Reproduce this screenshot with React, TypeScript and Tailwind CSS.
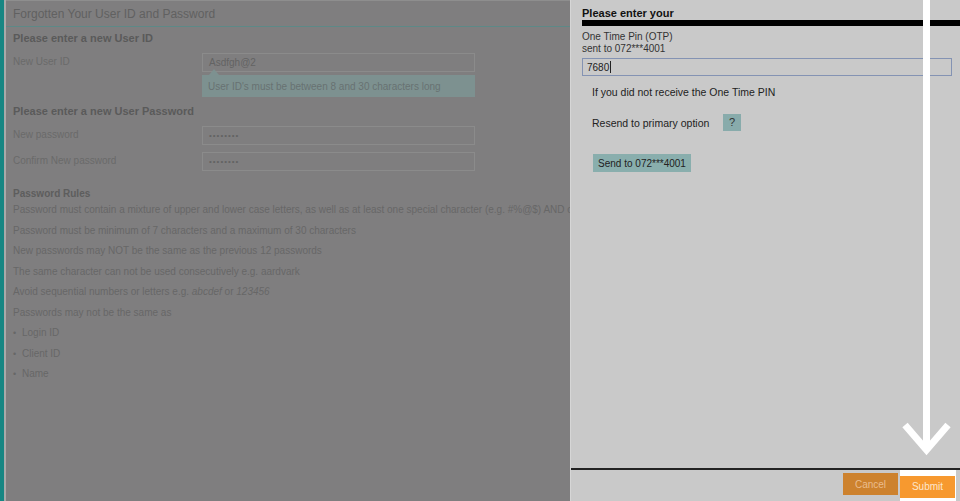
import React from 'react'

const rules = [
  'Password must contain a mixture of upper and lower case letters, as well as at least one special character (e.g. #%@$) AND one number',
  'Password must be minimum of 7 characters and a maximum of 30 characters',
  'New passwords may NOT be the same as the previous 12 passwords',
  'The same character can not be used consecutively e.g. aardvark',
]

function Field({ label, children }: { label: string; children: React.ReactNode }) {
  return (
    <div className="flex">
      <div className="w-[189px] pt-[3px] text-[10px] leading-[12px] text-[#6a6a6a]">{label}</div>
      <div className="w-[273px]">{children}</div>
    </div>
  )
}

function PageBehind() {
  return (
    <div className="flex h-full">
      <div className="w-[4px] bg-[#178683]" />
      <div className="w-[2px] bg-[#a9a9a9]" />
      <div className="flex-1 border-t border-[#8e8e8e] bg-[#7f7e7f]">
        <div className="flex h-[26px] items-center border-b border-[#5d8987] pl-[7px] text-[12px] text-[#616161]">
          Forgotten Your User ID and Password
        </div>
        <div className="pl-[7px]">
          <div className="mt-[4px] text-[11px] font-bold leading-[14px] text-[#5a5a5a]">Please enter a new User ID</div>
          <div className="mt-[8px]">
            <Field label="New User ID">
              <div className="flex h-[19px] items-center border border-[#8b8b8b] px-[6px] text-[10px] text-[#636363]">Asdfgh@2</div>
              <div className="relative mt-[3px] flex h-[22px] items-center bg-[#7d9190] px-[6px] text-[10px] text-[#687272]">
                <span className="absolute -top-[6px] left-[7px] h-0 w-0 border-x-[5px] border-b-[6px] border-x-transparent border-b-[#7d9190]" />
                User ID's must be between 8 and 30 characters long
              </div>
            </Field>
          </div>
          <div className="mt-[7px] text-[11px] font-bold leading-[14px] text-[#5a5a5a]">Please enter a new User Password</div>
          <div className="mt-[8px]">
            <Field label="New password">
              <div className="flex h-[19px] items-center border border-[#8b8b8b] px-[6px] text-[8px] tracking-[1px] text-[#636363]">••••••••</div>
            </Field>
          </div>
          <div className="mt-[7px]">
            <Field label="Confirm New password">
              <div className="flex h-[19px] items-center border border-[#8b8b8b] px-[6px] text-[8px] tracking-[1px] text-[#636363]">••••••••</div>
            </Field>
          </div>
          <div className="mt-[16px] text-[10px] font-bold leading-[13px] text-[#5d5d5d]">Password Rules</div>
          <div className="text-[10px] leading-[20.5px] text-[#676767]">
            {rules.map((r) => (
              <div key={r} className="whitespace-nowrap">{r}</div>
            ))}
            <div>
              Avoid sequential numbers or letters e.g. <i>abcdef</i> or <i>123456</i>
            </div>
            <div>Passwords may not be the same as</div>
            {['Login ID', 'Client ID', 'Name'].map((b) => (
              <div key={b} className="flex">
                <span className="w-[9px] text-[9px]">•</span>
                <span>{b}</span>
              </div>
            ))}
          </div>
        </div>
      </div>
    </div>
  )
}

function OtpPanel() {
  return (
    <div className="absolute right-0 top-0 flex h-full w-[390px] flex-col border-l border-[#d6d6d6] bg-[#c9c9c9] text-[#222]">
      <div className="flex-1 pl-[11px]">
        <div className="pt-[6px] text-[11px] font-bold leading-[14px] text-[#111]">Please enter your</div>
        <div className="h-[6px] bg-black" />
        <div className="mt-[5px] text-[10px] leading-[12px] text-[#333]">
          <div>One Time Pin (OTP)</div>
          <div>sent to 072***4001</div>
        </div>
        <div className="mr-[8px] mt-[3px] flex h-[18px] items-center border border-[#8493b3] px-[4px] text-[10px] text-[#222]">
          7680<span className="ml-px h-[12px] w-px bg-[#222]" />
        </div>
        <div className="ml-[10px] mt-[10px] text-[10.5px] leading-[12px]">If you did not receive the One Time PIN</div>
        <div className="ml-[10px] mt-[16px] flex items-center">
          <span className="w-[131px] text-[10.5px] leading-[12px]">Resend to primary option</span>
          <span className="flex h-[17px] w-[18px] items-center justify-center bg-[#88abab] text-[11px] text-[#333]">?</span>
        </div>
        <button className="ml-[11px] mt-[23px] flex h-[18px] w-[98px] items-center justify-center bg-[#89aead] text-[10px] text-[#222]">
          Send to 072***4001
        </button>
      </div>
      <div className="h-[2px] bg-[#222]" />
      <div className="flex h-[31px] items-start justify-end pr-[4px]">
        <button className="mr-[2px] mt-[3px] h-[22px] w-[55px] bg-[#cd822e] text-[10px] text-[#ebbd8d]">Cancel</button>
        <div className="h-full w-[56px] bg-white pt-[3px]">
          <button className="h-[22px] w-[55px] bg-[#f7992f] text-[10px] text-[#fde6cc]">Submit</button>
        </div>
      </div>
    </div>
  )
}

export default function App() {
  return (
    <div className="relative h-[501px] w-[960px] overflow-hidden font-['Liberation_Sans',Arial,sans-serif]">
      <PageBehind />
      <OtpPanel />
      <svg className="absolute left-[900px] top-0" width="60" height="470" viewBox="0 0 60 470">
        <line x1="26.5" y1="0" x2="26.5" y2="450" stroke="white" strokeWidth="7" />
        <polyline points="5,425 26.5,450 48,425" fill="none" stroke="white" strokeWidth="7" />
      </svg>
    </div>
  )
}
